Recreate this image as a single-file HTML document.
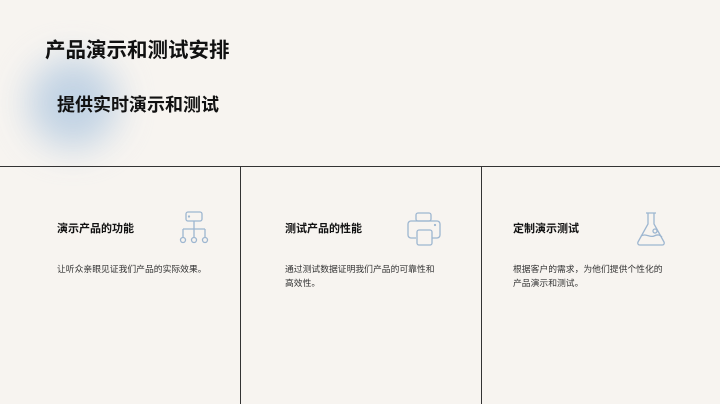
<!DOCTYPE html>
<html><head><meta charset="utf-8"><style>
body{margin:0;width:720px;height:404px;background:#f7f4f0;position:relative;overflow:hidden;font-family:"Liberation Sans","Noto Sans CJK SC",sans-serif;color:#111}
.blob{position:absolute;left:28px;top:58px;width:90px;height:90px;border-radius:50%;background:#b8cde2;filter:blur(18px);opacity:.85}
.t{position:absolute;font-weight:bold;white-space:nowrap}
.h{position:absolute;background:#333}
.ct{position:absolute;font-size:11px;font-weight:bold;top:220px}
.cb{position:absolute;font-size:8.8px;line-height:14px;top:262px;color:#333;width:155px}
svg{position:absolute;top:210px}
</style></head><body>
<div class="blob"></div>
<div class="t" style="left:45px;top:33px;font-size:20.5px">产品演示和测试安排</div>
<div class="t" style="left:57px;top:91px;font-size:18px">提供实时演示和测试</div>
<div class="h" style="left:0;top:166px;width:720px;height:1px"></div>
<div class="h" style="left:240px;top:166px;width:1px;height:238px"></div>
<div class="h" style="left:481px;top:166px;width:1px;height:238px"></div>

<div class="ct" style="left:57px">演示产品的功能</div>
<div class="cb" style="left:57px">让听众亲眼见证我们产品的实际效果。</div>
<svg style="left:178px" width="36" height="38" viewBox="0 0 36 38" fill="none" stroke="#9db6d0" stroke-width="1.3"><rect x="8" y="2" width="16" height="9" rx="2"/><circle cx="11" cy="6.5" r=".5"/><path d="M16 11v8M5 19h22M5 19v8M16 19v8M27 19v8"/><circle cx="5" cy="30" r="2.5"/><circle cx="16" cy="30" r="2.5"/><circle cx="27" cy="30" r="2.5"/></svg>

<div class="ct" style="left:285px">测试产品的性能</div>
<div class="cb" style="left:285px">通过测试数据证明我们产品的可靠性和高效性。</div>
<svg style="left:405px" width="38" height="38" viewBox="0 0 38 38" fill="none" stroke="#9db6d0" stroke-width="1.3"><rect x="11" y="3" width="15" height="8" rx="2"/><path d="M11 28H6a3 3 0 0 1-3-3V14a3 3 0 0 1 3-3h26a3 3 0 0 1 3 3v11a3 3 0 0 1-3 3h-5"/><rect x="12" y="20" width="15" height="15" rx="2"/><circle cx="30" cy="15" r=".5"/></svg>

<div class="ct" style="left:513px">定制演示测试</div>
<div class="cb" style="left:513px">根据客户的需求，为他们提供个性化的产品演示和测试。</div>
<svg style="left:634px" width="36" height="38" viewBox="0 0 36 38" fill="none" stroke="#9db6d0" stroke-width="1.3"><path d="M12 3h10M14 3v11L4 32a2 2 0 0 0 2 3h22a2 2 0 0 0 2-3L20 14V3"/><path d="M7 26c5-3 9 2 13 0s6-1 8 1"/><circle cx="21" cy="21" r="2"/></svg>
</body></html>
